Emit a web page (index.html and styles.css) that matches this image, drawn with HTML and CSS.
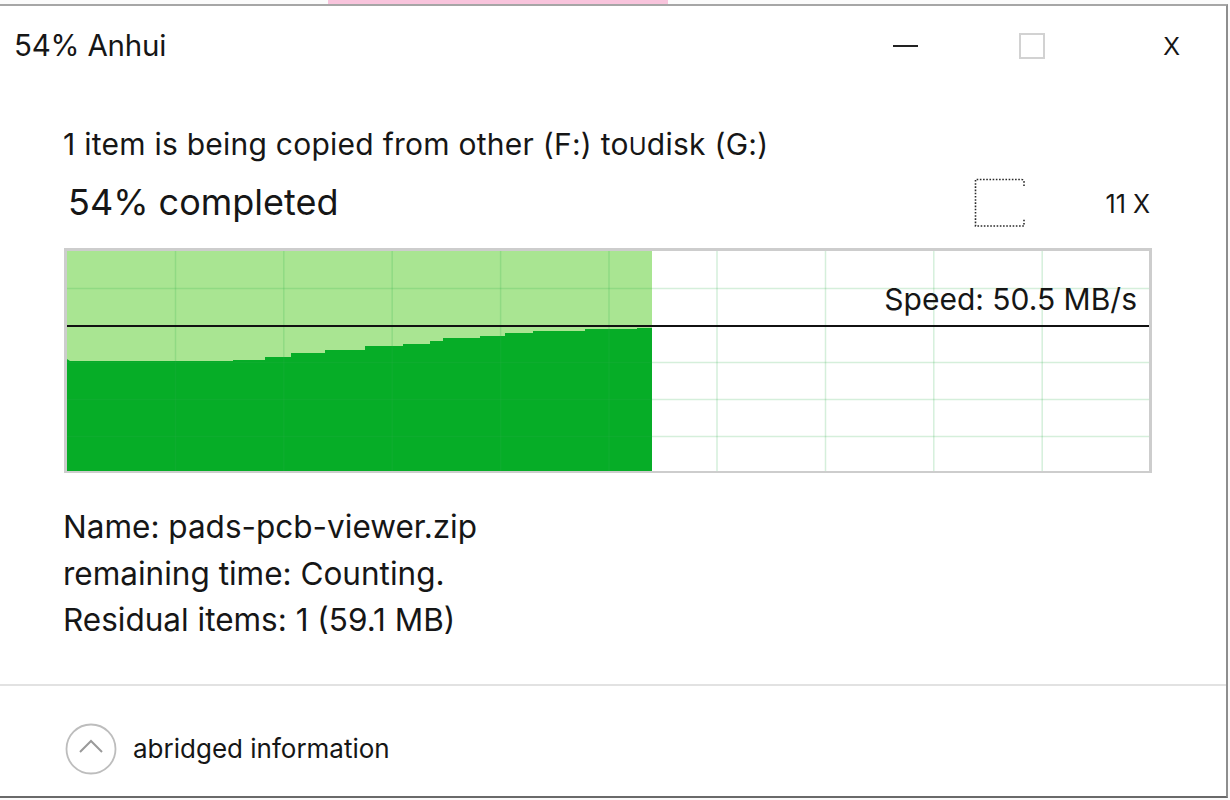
FILE: index.html
```html
<!DOCTYPE html>
<html lang="en">
<head>
<meta charset="utf-8">
<title>54% Anhui</title>
<link rel="stylesheet" href="styles.css">
</head>
<body>
<div class="screen">
  <div class="backdrop"><div class="pink"></div></div>
  <div class="window">
    <div class="titlebar">
      <div class="title">54% Anhui</div>
      <div class="ctl-min"></div>
      <div class="ctl-max"></div>
      <div class="ctl-close">X</div>
    </div>
    <div class="content">
      <div class="line-from">1 item is being copied from other (F:) to<span class="u">U</span>disk (G:)</div>
      <div class="status-row">
        <div class="percent">54% completed</div>
        <svg class="pause-icon" width="52" height="50" viewBox="0 0 52 50">
          <path d="M50 8 V4 Q50 1.5 47.5 1.5 H1.5 V48 H50 V41" fill="none" stroke="#2a2a2a" stroke-width="1.6" stroke-dasharray="1.6 1.6"/>
        </svg>
        <div class="cancel">11 X</div>
      </div>
      <div class="graph">
        <svg class="graph-svg" width="1082" height="220" viewBox="0 0 1082 220">
          <rect x="0" y="0" width="585" height="220" fill="#a9e592"/>
          <polygon fill="#06ad27" points="0,220 0,108 3,110 166,110 166,109 198,109 198,106 224,106 224,102 258,102 258,99 298,99 298,95 336,95 336,93 363,93 363,90 376,90 376,87 413,87 413,85 438,85 438,82 466,82 466,80 518,80 518,78 570,78 570,77 585,77 585,220"/>
          <g stroke="#2fae4a" stroke-opacity="0.2" stroke-width="1.5">
            <line x1="108.5" y1="0" x2="108.5" y2="220"/>
            <line x1="216.8" y1="0" x2="216.8" y2="220"/>
            <line x1="325.2" y1="0" x2="325.2" y2="220"/>
            <line x1="433.6" y1="0" x2="433.6" y2="220"/>
            <line x1="542" y1="0" x2="542" y2="220"/>
            <line x1="650" y1="0" x2="650" y2="220"/>
            <line x1="758.5" y1="0" x2="758.5" y2="220"/>
            <line x1="866.8" y1="0" x2="866.8" y2="220"/>
            <line x1="975.2" y1="0" x2="975.2" y2="220"/>
            <line x1="0" y1="37.5" x2="1082" y2="37.5"/>
            <line x1="0" y1="111.5" x2="1082" y2="111.5"/>
            <line x1="0" y1="148.5" x2="1082" y2="148.5"/>
            <line x1="0" y1="185.5" x2="1082" y2="185.5"/>
          </g>
          <line x1="0" y1="75" x2="1082" y2="75" stroke="#111" stroke-width="2"/>
        </svg>
        <div class="speed">Speed: 50.5 MB/s</div>
      </div>
      <div class="details">
        <div>Name: pads-pcb-viewer.zip</div>
        <div>remaining time: Counting.</div>
        <div>Residual items: 1 (59.1 MB)</div>
      </div>
    </div>
    <div class="footer">
      <svg class="toggle" width="52" height="52" viewBox="0 0 52 52">
        <circle cx="26" cy="26" r="24.5" fill="none" stroke="#bdbdbd" stroke-width="1.8"/>
        <path d="M15 29 L26 18 L37 29" fill="none" stroke="#9a9a9a" stroke-width="2"/>
      </svg>
      <div class="toggle-label">abridged information</div>
    </div>
  </div>
</div>
</body>
</html>
```

FILE: styles.css
```css
html, body {
  margin: 0;
  padding: 0;
  background: #fbfbfb;
}
body {
  font-family: Inter, "Liberation Sans", Arial, sans-serif;
  color: #161616;
}
.screen {
  width: 1230px;
  height: 800px;
  overflow: hidden;
  background: #fbfbfb;
}
.backdrop {
  height: 4px;
  background: #fbfbfb;
}
.pink {
  margin-left: 328px;
  width: 340px;
  height: 4px;
  background: #f8c4dc;
}
.window {
  width: 1226px;
  height: 790px;
  background: #fff;
  border-top: 2px solid #a6a6a6;
  border-right: 2px solid #8e8e8e;
  border-bottom: 2px solid #6a6a6a;
  display: flex;
  flex-direction: column;
}
.titlebar {
  height: 80px;
  display: flex;
  align-items: center;
  padding-left: 14px;
  padding-right: 46px;
}
.title {
  flex: 1;
  font-size: 29.5px;
  letter-spacing: -0.2px;
  padding-bottom: 2px;
}
.ctl-min {
  width: 25px;
  height: 2px;
  background: #222;
  margin-right: 101px;
}
.ctl-max {
  width: 22px;
  height: 22px;
  border: 2px solid #d2d2d2;
  margin-right: 118px;
}
.ctl-close {
  font-family: "Liberation Sans", Arial, sans-serif;
  font-size: 25px;
  width: 17px;
  text-align: center;
}
.content {
  padding-left: 63px;
  padding-right: 74px;
}
.line-from {
  margin-top: 40px;
  height: 36px;
  line-height: 36px;
  font-size: 30px;
  letter-spacing: 0.25px;
}
.u {
  font-size: 24px;
}
.status-row {
  margin-top: 16px;
  height: 48px;
  display: flex;
  align-items: center;
}
.percent {
  flex: 1;
  padding-left: 5px;
  font-size: 36px;
}
.pause-icon {
  margin-right: 80px;
  margin-top: 2px;
  display: block;
}
.cancel {
  font-size: 25px;
  padding-right: 2px;
  padding-top: 3px;
}
.graph {
  position: relative;
  margin-top: 22px;
  width: 1082px;
  height: 220px;
  border: 3px solid #cdcdcd;
  border-bottom-width: 2px;
  margin-left: 1px;
}
.graph-svg {
  display: block;
}
.speed {
  position: absolute;
  right: 12px;
  top: 30px;
  font-size: 30px;
  line-height: 36px;
}
.details {
  margin-top: 31px;
  font-size: 31.5px;
  line-height: 46.5px;
}
.footer {
  margin-top: 40px;
  border-top: 2px solid #e2e2e2;
  flex: 1;
  display: flex;
  align-items: center;
  padding-left: 65px;
  padding-top: 16px;
}
.toggle {
  display: block;
}
.toggle-label {
  margin-left: 16px;
  font-size: 26px;
}
```
